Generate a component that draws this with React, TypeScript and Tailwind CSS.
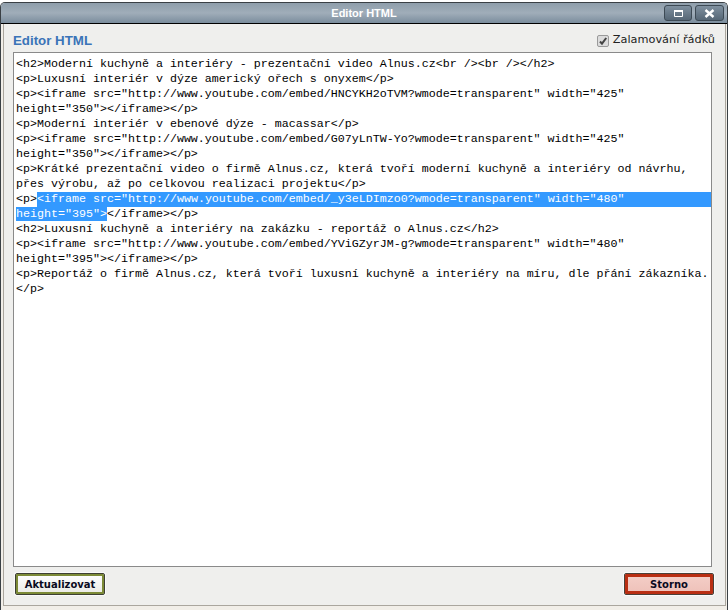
import React from 'react';

const lines = [
  '<h2>Moderní kuchyně a interiéry - prezentační video Alnus.cz<br /><br /></h2>',
  '<p>Luxusní interiér v dýze americký ořech s onyxem</p>',
  '<p><iframe src="http://www.youtube.com/embed/HNCYKH2oTVM?wmode=transparent" width="425" height="350"></iframe></p>',
  '<p>Moderní interiér v ebenové dýze - macassar</p>',
  '<p><iframe src="http://www.youtube.com/embed/G07yLnTW-Yo?wmode=transparent" width="425" height="350"></iframe></p>',
  '<p>Krátké prezentační video o firmě Alnus.cz, která tvoří moderní kuchyně a interiéry od návrhu, přes výrobu, až po celkovou realizaci projektu</p>',
];

const linesAfter = [
  '<h2>Luxusní kuchyně a interiéry na zakázku - reportáž o Alnus.cz</h2>',
  '<p><iframe src="http://www.youtube.com/embed/YViGZyrJM-g?wmode=transparent" width="480" height="395"></iframe></p>',
  '<p>Reportáž o firmě Alnus.cz, která tvoří luxusní kuchyně a interiéry na míru, dle přání zákazníka. </p>',
];

const App = () => {
  return (
    <div className="h-[610px] w-[728px] overflow-hidden bg-white pt-[2px] font-['Liberation_Sans',sans-serif]">
      <div className="flex h-[608px] flex-col rounded-t-[5px] border-t border-l border-r border-[#3a4045] bg-[#f1eee8]">
        {/* Title bar */}
        <div className="relative flex h-[21px] items-center justify-center rounded-t-[4px] border-b border-black bg-gradient-to-b from-[#8f9eab] via-[#a0adb9] to-[#7b8d9d]">
          <span className="text-[11px] font-bold text-white">Editor HTML</span>
          <div className="absolute top-[2px] right-[3px] flex gap-[3px]">
            <div className="flex h-[16px] w-[28px] items-center justify-center rounded-[3px] border border-[#3d4a55] bg-gradient-to-b from-[#7f909f] to-[#566776]">
              <svg width="11" height="9" viewBox="0 0 11 9">
                <path d="M1.5 1.5h8v6h-8z" fill="none" stroke="#fff" strokeWidth="1" />
                <path d="M1 2h9" stroke="#fff" strokeWidth="2" />
              </svg>
            </div>
            <div className="flex h-[16px] w-[29px] items-center justify-center rounded-[3px] border border-[#3d4a55] bg-gradient-to-b from-[#7f909f] to-[#566776]">
              <svg width="11" height="9" viewBox="0 0 11 9">
                <path d="M1.5 1l8 7M9.5 1l-8 7" stroke="#fff" strokeWidth="2.4" />
              </svg>
            </div>
          </div>
        </div>

        {/* Body */}
        <div className="mr-[1px] ml-[2px] mb-[4px] flex flex-1 flex-col border border-t-0 border-[#aaa69e] bg-[#efefed] pr-[13px] pl-[9px]">
          <div className="flex h-[28px] items-center justify-between pt-[5px]">
            <span className="text-[13.3px] font-bold text-[#3a74b8]">Editor HTML</span>
            <label className="-mr-[3px] flex items-center gap-[4px] font-['DejaVu_Sans',sans-serif] text-[11.3px] text-[#222]">
              <span className="flex h-[12px] w-[12px] items-center justify-center rounded-[2px] border border-[#9a9a9a] bg-[#dcdcdc]">
                <svg width="10" height="10" viewBox="0 0 10 10">
                  <path d="M2 5.5l2 2.2L8.2 2" fill="none" stroke="#444" strokeWidth="2" />
                </svg>
              </span>
              Zalamování řádků
            </label>
          </div>

          {/* Source area */}
          <div className="h-[515px] border border-[#8a8a8a] bg-white pt-[4px] pl-[2px] font-['Liberation_Mono',monospace] text-[11.67px] leading-[15px] whitespace-pre-wrap text-black">
            {lines.map((l) => (
              <div key={l}>{l}</div>
            ))}
            <div className="flex">
              <span>{'<p>'}</span>
              <span className="flex-1 bg-[#3399ff] text-white">{'<iframe src="http://www.youtube.com/embed/_y3eLDImzo0?wmode=transparent" width="480"'}</span>
            </div>
            <div>
              <span className="bg-[#3399ff] text-white">{'height="395">'}</span>
              {'</iframe></p>'}
            </div>
            {linesAfter.map((l) => (
              <div key={l}>{l}</div>
            ))}
          </div>

          {/* Buttons */}
          <div className="-mr-[2px] flex justify-between pt-[6px] pl-[2px] font-['DejaVu_Sans',sans-serif]">
            <button className="h-[22px] w-[90px] rounded-[2px] border border-[#3d3f33] bg-gradient-to-b from-[#ffffff] to-[#e9e9e4] text-[10px] font-bold text-[#0a0a20] shadow-[inset_0_0_0_2px_#7c8a36,0_0_0_1px_#fafafa]">
              Aktualizovat
            </button>
            <button className="h-[22px] w-[90px] rounded-[2px] border border-[#4a4038] bg-gradient-to-b from-[#f4cfc8] to-[#eec0b8] text-[10px] font-bold text-[#0a0a20] shadow-[inset_0_0_0_3px_#b92e12,0_0_0_1px_#fafafa]">
              Storno
            </button>
          </div>
        </div>
      </div>
    </div>
  );
};

export default App;
